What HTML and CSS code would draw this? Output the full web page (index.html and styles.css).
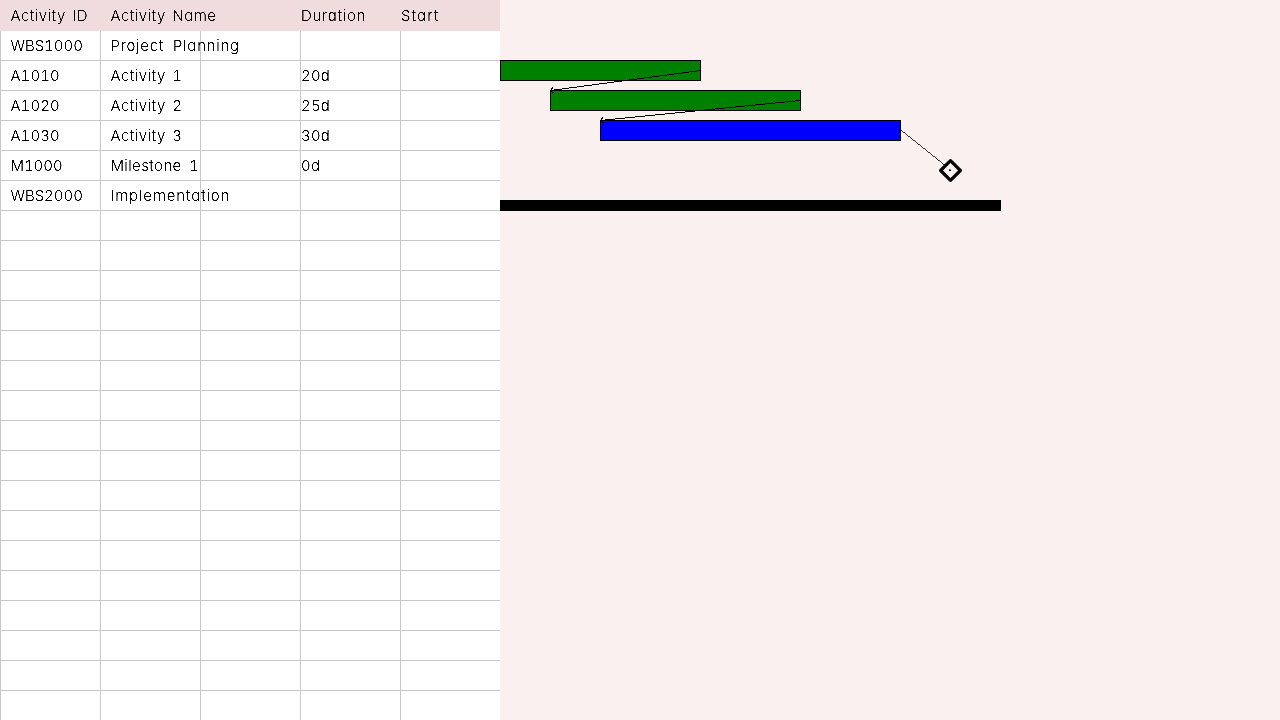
FILE: index.html
```html
<!DOCTYPE html>
<html lang="en">
<head>
<meta charset="utf-8">
<title>Project schedule</title>
<link rel="stylesheet" href="styles.css">
</head>
<body>
<svg class="defs" width="0" height="0">
  <filter id="crisp" x="-5%" y="-5%" width="250%" height="110%" color-interpolation-filters="sRGB">
    <feComponentTransfer><feFuncA type="linear" slope="4" intercept="-1.4"/></feComponentTransfer>
  </filter>
</svg>
<main class="app">
  <section class="table">
    <div class="head"><span class="aid">Activity ID</span><span class="aname">Activity Name</span><span></span><span class="dur">Duration</span><span class="start">Start</span></div>
    <div class="row"><span class="code wbs">WBS1000</span><span class="name planning">Project Planning</span><span></span><span></span><span></span></div>
    <div class="row"><span class="code">A1010</span><span class="name">Activity 1</span><span></span><span class="days">20d</span><span></span></div>
    <div class="row"><span class="code">A1020</span><span class="name">Activity 2</span><span></span><span class="days">25d</span><span></span></div>
    <div class="row"><span class="code">A1030</span><span class="name">Activity 3</span><span></span><span class="days">30d</span><span></span></div>
    <div class="row"><span class="code mile">M1000</span><span class="name milestone">Milestone 1</span><span></span><span class="days">0d</span><span></span></div>
    <div class="row"><span class="code wbs">WBS2000</span><span class="name impl">Implementation</span><span></span><span></span><span></span></div>
    <div class="row"><span></span><span></span><span></span><span></span><span></span></div>
    <div class="row"><span></span><span></span><span></span><span></span><span></span></div>
    <div class="row"><span></span><span></span><span></span><span></span><span></span></div>
    <div class="row"><span></span><span></span><span></span><span></span><span></span></div>
    <div class="row"><span></span><span></span><span></span><span></span><span></span></div>
    <div class="row"><span></span><span></span><span></span><span></span><span></span></div>
    <div class="row"><span></span><span></span><span></span><span></span><span></span></div>
    <div class="row"><span></span><span></span><span></span><span></span><span></span></div>
    <div class="row"><span></span><span></span><span></span><span></span><span></span></div>
    <div class="row"><span></span><span></span><span></span><span></span><span></span></div>
    <div class="row"><span></span><span></span><span></span><span></span><span></span></div>
    <div class="row"><span></span><span></span><span></span><span></span><span></span></div>
    <div class="row"><span></span><span></span><span></span><span></span><span></span></div>
    <div class="row"><span></span><span></span><span></span><span></span><span></span></div>
    <div class="row"><span></span><span></span><span></span><span></span><span></span></div>
    <div class="row"><span></span><span></span><span></span><span></span><span></span></div>
    <div class="row"><span></span><span></span><span></span><span></span><span></span></div>
  </section>
  <svg class="chart" width="780" height="720" viewBox="500 0 780 720">
    <g class="bars">
      <rect class="done" x="500.5" y="60.5" width="200" height="20"/>
      <rect class="done" x="550.5" y="90.5" width="250" height="20"/>
      <rect class="active" x="600.5" y="120.5" width="300" height="20"/>
      <rect class="summary" x="500.5" y="200.5" width="500" height="10"/>
    </g>
    <path class="link" d="M700.5 70.5L550.5 90.5l2.5-3M550.5 90.5l3 2.5M800.5 100.5L600.5 120.5l2.5-3M600.5 120.5l3 2.5"/>
    <path class="link thin" d="M900.5 130.5L950.5 170.5"/>
    <path class="milestone-mark" d="M950.5 160.6l9.9 9.9-9.9 9.9-9.9-9.9z"/>
    <rect x="949" y="169.5" width="2" height="1.5"/>
  </svg>
</main>
</body>
</html>
```
FILE: styles.css
```css
body { margin: 0; }
.defs { position: absolute; }
.app {
  display: flex;
  width: 1280px;
  height: 720px;
  overflow: hidden;
  background: #faf0f0;
  font-family: Inter, "Noto Sans", sans-serif;
  font-feature-settings: "cv11", "tnum";
  font-weight: 300;
  font-size: 15px;
  color: #000;
}
.table { flex: none; width: 500px; height: 720px; overflow: hidden; background: #fff; }
.head, .row { display: grid; grid-template-columns: repeat(5, 100px); }
.head { height: 31px; line-height: 32px; background: #f0dcdc; }
.row { height: 30px; line-height: 29px; }
.head span, .row span { box-sizing: border-box; white-space: nowrap; }
.row span { border-left: 1px solid #c8c8c8; border-bottom: 1px solid #c8c8c8; }
.head span { border-left: 1px solid transparent; }
.head .aid, .head .aname, .row .code, .row .name { padding-left: 9.4px; }
.head span, .code, .name, .days { filter: url(#crisp); }
.aid, .aname, .row .name { letter-spacing: .5px; word-spacing: 2px; }
.dur { letter-spacing: .7px; }
.start { letter-spacing: 1.1px; }
.code { letter-spacing: .1px; }
.code.wbs { letter-spacing: 0; }
.code.mile { letter-spacing: 0; }
.row .planning { letter-spacing: .75px; word-spacing: 4px; }
.row .milestone { letter-spacing: .4px; word-spacing: 3px; }
.row .impl { letter-spacing: .85px; }
.days { letter-spacing: .2px; }
.chart { display: block; flex: none; }
.bars rect { stroke: #000; stroke-width: 1; }
.done { fill: #008000; }
.active { fill: #00f; }
.summary { fill: #000; }
.link { fill: none; stroke: #000; stroke-width: 1; shape-rendering: crispEdges; }
.link.thin { stroke-width: .8; }
.milestone-mark { fill: #faf0f0; stroke: #000; stroke-width: 3.2; stroke-linejoin: round; }
```
